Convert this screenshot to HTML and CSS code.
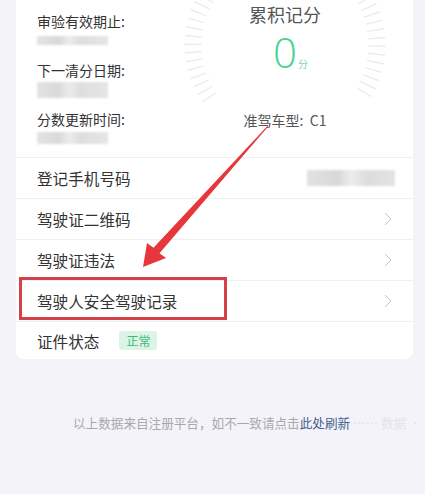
FILE: index.html
```html
<!DOCTYPE html>
<html lang="zh-CN">
<head>
<meta charset="utf-8">
<title>驾驶证信息</title>
<link rel="stylesheet" href="styles.css">
</head>
<body>
<div class="page">
  <div class="card">
    <div class="top">
      <div class="info">
        <div class="item">
          <div class="label">审验有效期止:</div>
          <div class="blur b1"></div>
        </div>
        <div class="item">
          <div class="label">下一清分日期:</div>
          <div class="blur b2"></div>
        </div>
        <div class="item">
          <div class="label">分数更新时间:</div>
          <div class="blur b3"></div>
        </div>
      </div>
      <div class="gauge">
        <svg class="ticks" width="200" height="157" viewBox="0 0 200 157">
          <path d="M24.64 97.77 A92 92 0 1 1 175.36 97.77" fill="none" stroke="#ebebee" stroke-width="17" stroke-dasharray="1.3 6.73"/>
        </svg>
        <div class="g-title">累积记分</div>
        <div class="score"><span class="num">0</span><span class="unit">分</span></div>
        <div class="g-type">准驾车型:&nbsp; C1</div>
      </div>
    </div>
    <div class="row">
      <span class="row-label">登记手机号码</span>
      <span class="phone"></span>
    </div>
    <div class="row">
      <span class="row-label">驾驶证二维码</span>
      <svg class="chev" width="8" height="14" viewBox="0 0 8 14"><path d="M1 1 L7 7 L1 13" fill="none" stroke="#c4c4c4" stroke-width="1"/></svg>
    </div>
    <div class="row">
      <span class="row-label">驾驶证违法</span>
      <svg class="chev" width="8" height="14" viewBox="0 0 8 14"><path d="M1 1 L7 7 L1 13" fill="none" stroke="#c4c4c4" stroke-width="1"/></svg>
    </div>
    <div class="row">
      <span class="row-label">驾驶人安全驾驶记录</span>
      <svg class="chev" width="8" height="14" viewBox="0 0 8 14"><path d="M1 1 L7 7 L1 13" fill="none" stroke="#c4c4c4" stroke-width="1"/></svg>
    </div>
    <div class="row last">
      <span class="row-label">证件状态</span>
      <span class="badge">正常</span>
    </div>
  </div>
  <div class="footer">以上数据来自注册平台，如不一致请点击<span class="link">此处刷新</span><span class="faint"> …… 数据 ·</span></div>

  <div class="highlight"></div>
  <svg class="arrow" width="425" height="494" viewBox="0 0 425 494">
    <polygon points="267.6,125.7 153.5,247.85 147,243 143,267 166,258 159.5,253.15 268.4,126.3" fill="#e6373c"/>
  </svg>
</div>
</body>
</html>
```

FILE: styles.css
```css
html, body {
  margin: 0;
  padding: 0;
  background: #f4f3f9;
}
body {
  font-family: "Noto Sans CJK SC", "Noto Sans", "Liberation Sans", sans-serif;
  color: #333;
}
.page {
  position: relative;
  width: 425px;
  height: 494px;
  overflow: hidden;
}
.card {
  margin-left: 16px;
  width: 397px;
  background: #fff;
  border-radius: 0 0 8px 8px;
}
.top {
  display: flex;
  height: 157px;
}
.info {
  flex: 1;
  padding: 11px 0 0 21px;
}
.item {
  height: 49px;
}
.label {
  font-size: 14px;
  line-height: 20px;
  color: #333;
}
.blur {
  background: linear-gradient(90deg, #e4e4e4 0%, #d9d9d9 30%, #ececec 45%, #dedede 60%, #e6e6e6 100%);
  filter: blur(1.2px);
  width: 71px;
}
.b1 { height: 9px; margin-top: 5px; }
.b2 { height: 16px; margin-top: 2px; }
.b3 { height: 12px; margin-top: 3px; }
.gauge {
  position: relative;
  width: 200px;
  margin-right: 28px;
  text-align: center;
}
.ticks {
  position: absolute;
  left: 0;
  top: 0;
  overflow: visible;
}
.g-title {
  position: relative;
  margin-top: 4px;
  font-size: 18px;
  line-height: 20px;
  color: #555;
}
.score {
  position: relative;
  margin-top: 8px;
  height: 40px;
  line-height: 40px;
  padding-left: 11px;
}
.num {
  font-family: "Open Sans", "Liberation Sans", sans-serif;
  font-weight: 300;
  font-size: 42px;
  line-height: 40px;
  color: #47d492;
}
.unit {
  font-size: 10px;
  line-height: 10px;
  color: #7fd6ad;
  margin-left: 1px;
}
.g-type {
  position: relative;
  margin-top: 38px;
  font-size: 14px;
  line-height: 20px;
  color: #555;
}
.row {
  display: flex;
  align-items: center;
  height: 40px;
  padding: 0 21px;
  border-top: 1px solid #efeff2;
}
.row.last {
  height: 37px;
}
.row-label {
  flex: 1;
  font-size: 15.6px;
  line-height: 20px;
  color: #333;
}
.row.last .row-label {
  flex: none;
}
.phone {
  width: 88px;
  height: 16px;
  margin-right: -3px;
  background: linear-gradient(90deg, #e2e2e2 0%, #d8d8d8 35%, #ececec 50%, #dcdcdc 70%, #e4e4e4 100%);
  filter: blur(1.2px);
}
.chev {
  display: block;
}
.badge {
  margin-left: 20px;
  width: 38px;
  height: 19px;
  border-radius: 3px;
  background: #dcf4e6;
  color: #3dba7a;
  font-size: 12px;
  line-height: 19px;
  text-align: center;
}
.footer {
  margin-top: 55px;
  padding-left: 73px;
  white-space: nowrap;
  font-size: 12.6px;
  line-height: 18px;
  color: #a9a9ad;
}
.link {
  color: #44608c;
}
.faint {
  color: #e4e4e8;
}
.highlight {
  position: absolute;
  left: 19px;
  top: 277px;
  width: 202px;
  height: 37px;
  border: 3px solid #d3414a;
}
.arrow {
  position: absolute;
  left: 0;
  top: 0;
  pointer-events: none;
}
```
